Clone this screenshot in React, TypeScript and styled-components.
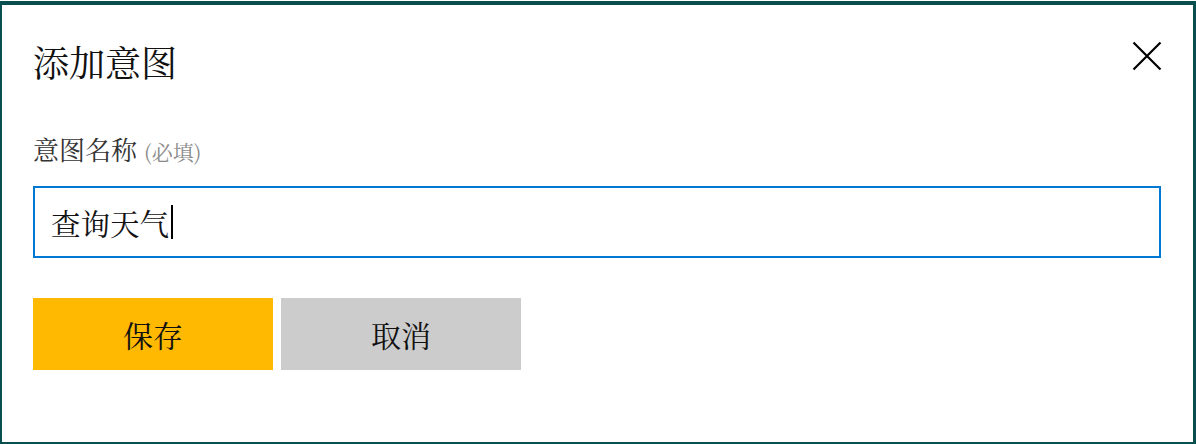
import React from "react";
import styled, { createGlobalStyle } from "styled-components";

const GlobalStyle = createGlobalStyle`
  html, body {
    margin: 0;
    padding: 0;
    background: #ffffff;
  }
  body {
    font-family: "Noto Serif CJK SC", "Liberation Serif", serif;
    color: #000000;
  }
`;

const Dialog = styled.div`
  box-sizing: border-box;
  width: 1196px;
  height: 443px;
  margin-top: 1px;
  border-style: solid;
  border-color: #0a4f4f;
  border-width: 4px 3px 2px 2px;
  padding: 37px 32px 0 31px;
  display: flex;
  flex-direction: column;
  background: #ffffff;
`;

const Header = styled.div`
  display: flex;
  justify-content: space-between;
  align-items: flex-start;
  height: 40px;
`;

const Title = styled.h1`
  margin: 0;
  font-size: 36px;
  line-height: 40px;
  font-weight: 400;
  color: #111111;
`;

const CloseButton = styled.button`
  width: 40px;
  height: 40px;
  margin: -6px -6px 0 0;
  padding: 0;
  border: none;
  background: transparent;
  display: flex;
  align-items: center;
  justify-content: center;
  cursor: pointer;
`;

const Label = styled.label`
  margin-top: 52px;
  height: 30px;
  font-size: 26px;
  line-height: 30px;
  color: #333333;
  display: flex;
  align-items: baseline;
  gap: 7px;
`;

const Required = styled.span`
  font-size: 21px;
  color: #8a8a8a;
`;

const InputBox = styled.div`
  box-sizing: border-box;
  margin-top: 22px;
  height: 72px;
  border: 2px solid #0078d4;
  padding: 0 16px;
  display: flex;
  align-items: center;
  font-size: 29.5px;
  color: #111111;
`;

const Caret = styled.span`
  display: inline-block;
  width: 1.5px;
  height: 34px;
  margin-left: 2px;
  background: #000000;
`;

const ButtonRow = styled.div`
  margin-top: 40px;
  display: flex;
  gap: 8px;
`;

const ActionButton = styled.button<{ $primary?: boolean }>`
  width: 240px;
  height: 72px;
  border: none;
  padding: 0;
  font-family: inherit;
  font-size: 30px;
  color: #111111;
  background: ${(p) => (p.$primary ? "#ffb900" : "#cccccc")};
  cursor: pointer;
`;

export default function App() {
  return (
    <>
      <GlobalStyle />
      <Dialog>
        <Header>
          <Title>添加意图</Title>
          <CloseButton aria-label="关闭">
            <svg width="30" height="30" viewBox="0 0 30 30">
              <path d="M1.5 1.5 L28.5 28.5 M28.5 1.5 L1.5 28.5" stroke="#000" strokeWidth="2.2" fill="none" />
            </svg>
          </CloseButton>
        </Header>
        <Label>
          意图名称<Required>(必填)</Required>
        </Label>
        <InputBox role="textbox">
          查询天气
          <Caret />
        </InputBox>
        <ButtonRow>
          <ActionButton $primary>保存</ActionButton>
          <ActionButton>取消</ActionButton>
        </ButtonRow>
      </Dialog>
    </>
  );
}
